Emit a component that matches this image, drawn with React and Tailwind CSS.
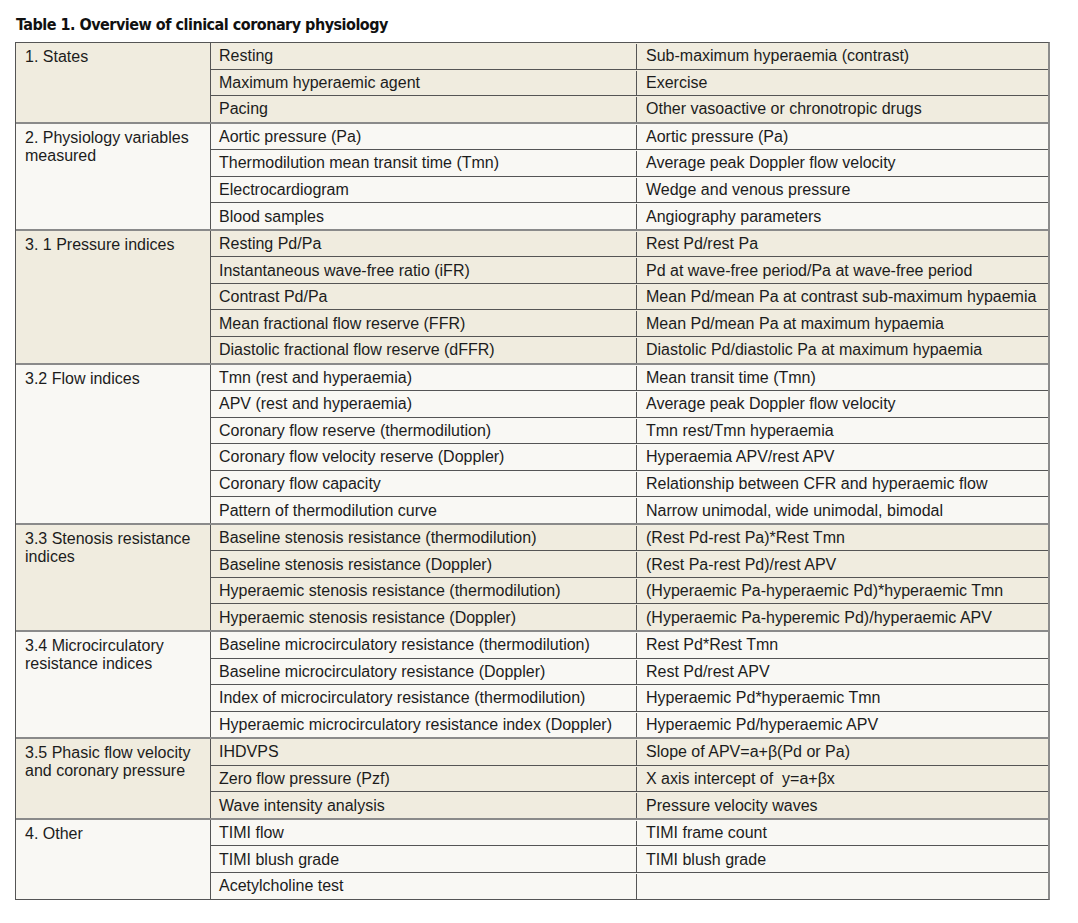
import React from 'react';

const groups = [
  {
    label: '1. States',
    rows: [
      ['Resting', 'Sub-maximum hyperaemia (contrast)'],
      ['Maximum hyperaemic agent', 'Exercise'],
      ['Pacing', 'Other vasoactive or chronotropic drugs'],
    ],
  },
  {
    label: '2. Physiology variables measured',
    rows: [
      ['Aortic pressure (Pa)', 'Aortic pressure (Pa)'],
      ['Thermodilution mean transit time (Tmn)', 'Average peak Doppler flow velocity'],
      ['Electrocardiogram', 'Wedge and venous pressure'],
      ['Blood samples', 'Angiography parameters'],
    ],
  },
  {
    label: '3. 1 Pressure indices',
    rows: [
      ['Resting Pd/Pa', 'Rest Pd/rest Pa'],
      ['Instantaneous wave-free ratio (iFR)', 'Pd at wave-free period/Pa at wave-free period'],
      ['Contrast Pd/Pa', 'Mean Pd/mean Pa at contrast sub-maximum hypaemia'],
      ['Mean fractional flow reserve (FFR)', 'Mean Pd/mean Pa at maximum hypaemia'],
      ['Diastolic fractional flow reserve (dFFR)', 'Diastolic Pd/diastolic Pa at maximum hypaemia'],
    ],
  },
  {
    label: '3.2 Flow indices',
    rows: [
      ['Tmn (rest and hyperaemia)', 'Mean transit time (Tmn)'],
      ['APV (rest and hyperaemia)', 'Average peak Doppler flow velocity'],
      ['Coronary flow reserve (thermodilution)', 'Tmn rest/Tmn hyperaemia'],
      ['Coronary flow velocity reserve (Doppler)', 'Hyperaemia APV/rest APV'],
      ['Coronary flow capacity', 'Relationship between CFR and hyperaemic flow'],
      ['Pattern of thermodilution curve', 'Narrow unimodal, wide unimodal, bimodal'],
    ],
  },
  {
    label: '3.3 Stenosis resistance indices',
    rows: [
      ['Baseline stenosis resistance (thermodilution)', '(Rest Pd-rest Pa)*Rest Tmn'],
      ['Baseline stenosis resistance (Doppler)', '(Rest Pa-rest Pd)/rest APV'],
      ['Hyperaemic stenosis resistance (thermodilution)', '(Hyperaemic Pa-hyperaemic Pd)*hyperaemic Tmn'],
      ['Hyperaemic stenosis resistance (Doppler)', '(Hyperaemic Pa-hyperemic Pd)/hyperaemic APV'],
    ],
  },
  {
    label: '3.4 Microcirculatory resistance indices',
    rows: [
      ['Baseline microcirculatory resistance (thermodilution)', 'Rest Pd*Rest Tmn'],
      ['Baseline microcirculatory resistance (Doppler)', 'Rest Pd/rest APV'],
      ['Index of microcirculatory resistance (thermodilution)', 'Hyperaemic Pd*hyperaemic Tmn'],
      ['Hyperaemic microcirculatory resistance index (Doppler)', 'Hyperaemic Pd/hyperaemic APV'],
    ],
  },
  {
    label: '3.5 Phasic flow velocity and coronary pressure',
    rows: [
      ['IHDVPS', 'Slope of APV=a+\u03b2(Pd or Pa)'],
      ['Zero flow pressure (Pzf)', 'X axis intercept of \u00a0y=a+\u03b2x'],
      ['Wave intensity analysis', 'Pressure velocity waves'],
    ],
  },
  {
    label: '4. Other',
    rows: [
      ['TIMI flow', 'TIMI frame count'],
      ['TIMI blush grade', 'TIMI blush grade'],
      ['Acetylcholine test', ''],
    ],
  },
];

const App = () => {
  return (
    <div className="min-h-[923px] bg-white pt-[15px] text-[#1c1c1c]" style={{ fontFamily: '"Liberation Sans", Arial, sans-serif' }}>
      <h1
        className="ml-[16px] text-[16px] font-bold leading-[20px] tracking-[-0.5px] text-[#111]"
        style={{ fontFamily: '"DejaVu Sans Condensed", "DejaVu Sans", sans-serif' }}
      >
        Table 1. Overview of clinical coronary physiology
      </h1>

      {/* Table */}
      <div className="ml-[15px] mt-[7px] w-[1035px] border-t border-l border-[#555] border-r-2 border-r-[#8c8c8c] border-b border-b-[#555]">
        {groups.map((group, gi) => (
          <div
            key={group.label}
            className={`flex ${gi % 2 === 0 ? 'bg-[#f0ecdf]' : 'bg-[#f9f8f4]'} ${gi > 0 ? 'border-t-2 border-[#8a8a8a]' : ''}`}
          >
            <div className="w-[195px] shrink-0 border-r border-[#555] px-[9px] pt-[5px] text-[16px] leading-[18px]">
              {group.label}
            </div>
            <div className="flex-1">
              {group.rows.map((row, ri) => (
                <div
                  key={ri}
                  className={`flex items-center pt-[1px] text-[16px] ${ri > 0 ? 'h-[26.56px] border-t border-[#555]' : 'h-[25.56px]'}`}
                >
                  <div className="flex h-full w-[426px] shrink-0 items-center border-r border-[#555] px-[8px]">{row[0]}</div>
                  <div className="px-[9px]">{row[1]}</div>
                </div>
              ))}
            </div>
          </div>
        ))}
      </div>
    </div>
  );
};

export default App;
